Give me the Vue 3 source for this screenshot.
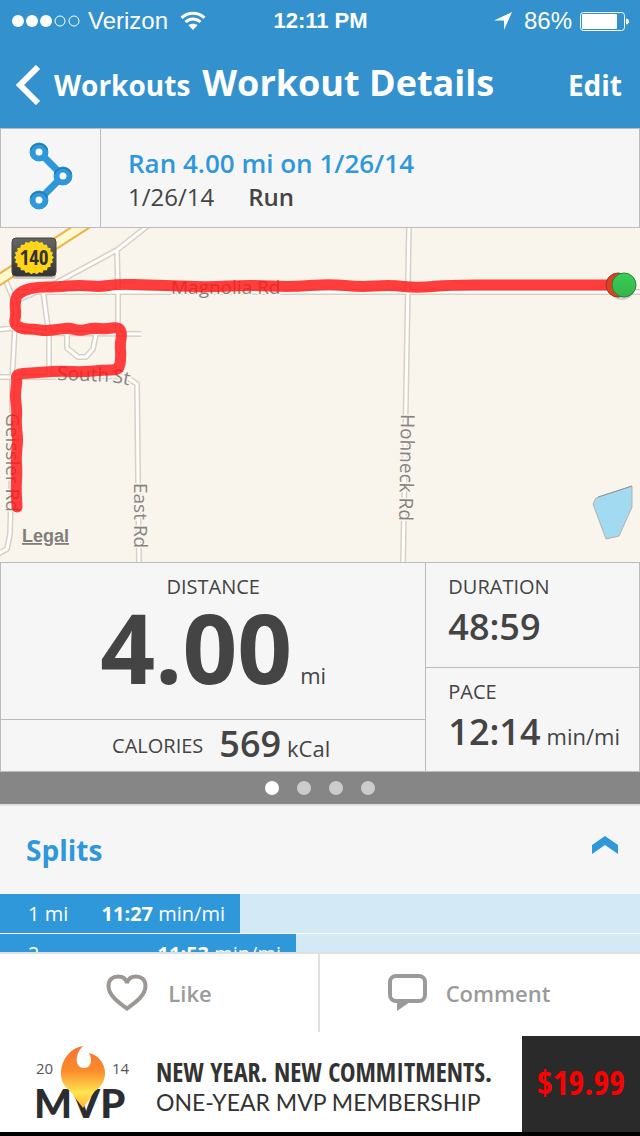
<template>
    <div class="screen">
        <header class="top">
            <div class="status">
                <div class="status__left">
                    <svg class="status__dots" viewBox="0 0 70 14" aria-hidden="true">
                        <circle v-for="n in 3" :key="n" :cx="n * 14 - 8" cy="7" r="6" fill="#fff" />
                        <circle v-for="n in 2" :key="n" :cx="n * 14 + 34" cy="7" r="5" fill="none" stroke="#fff" />
                    </svg>
                    <span>Verizon</span>
                    <svg class="status__wifi" viewBox="0 0 26 20" aria-hidden="true">
                        <g fill="none" stroke="#fff" stroke-width="3">
                            <path d="M1.5 6.8C8 .6 18 .6 24.500 6.800" />
                            <path d="M5.500 11C10 7 16 7 20.500 11" />
                        </g>
                        <path d="M8.500 14.200C11 12.200 15 12.200 17.500 14.200L13 19Z" fill="#fff" />
                    </svg>
                </div>
                <strong class="status__time">12:11 PM</strong>
                <div class="status__right">
                    <svg class="status__arrow" viewBox="0 0 18 18" aria-hidden="true">
                        <path d="M18 0L10 18V8.500H0Z" fill="#fff" />
                    </svg>
                    <span>86%</span>
                    <svg class="status__battery" viewBox="0 0 49 19" aria-hidden="true">
                        <rect x=".5" y=".5" width="44" height="18" rx="3" fill="none" stroke="#fff" />
                        <rect x="2" y="2" width="35" height="15" rx="1" fill="#fff" />
                        <path d="M46 6.500Q49 7 49 9.500T46 12.500Z" fill="#fff" />
                    </svg>
                </div>
            </div>
            <nav class="nav">
                <a class="nav__back" href="#workouts">
                    <svg viewBox="0 0 25 40" aria-hidden="true">
                        <path d="M22 2L4 20L22 38" fill="none" stroke="#fff" stroke-width="6" />
                    </svg>
                    <span>Workouts</span>
                </a>
                <h1 class="nav__title">Workout Details</h1>
                <a class="nav__edit" href="#edit">Edit</a>
            </nav>
        </header>

        <main class="content">
            <section class="summary">
                <div class="summary__icon">
                    <svg viewBox="0 0 46 70" aria-hidden="true">
                        <g fill="none" stroke="#fff" transform="translate(1 2)">
                            <path d="M11 11L35 35L11 59" stroke-width="7" />
                            <circle v-for="p in nodes" :key="p.y" :cx="p.x" :cy="p.y" r="6.500" stroke-width="6" />
                        </g>
                        <path d="M11 11L35 35L11 59" fill="none" stroke="#2f98da" stroke-width="7" />
                        <g v-for="p in nodes" :key="p.y">
                            <circle :cx="p.x" :cy="p.y" r="6.500" fill="#fff" stroke="#2f98da" stroke-width="6" />
                            <path :d="`M${p.x - 8.5} ${p.y - 2}A9 9 0 0 1 ${p.x + 8.5} ${p.y - 2}`" fill="none" stroke="#2379b4" stroke-width="1.500" />
                        </g>
                    </svg>
                </div>
                <div class="summary__text">
                    <h2>Ran 4.00 mi on 1/26/14</h2>
                    <p><span>1/26/14</span><b>Run</b></p>
                </div>
            </section>

            <svg class="map" viewBox="0 0 640 334" role="img" aria-label="Route map">
                <rect width="640" height="334" fill="#f9f4ec" />
                <g fill="none" stroke-linejoin="round">
                    <g v-for="layer in roadLayers" :key="layer.color" :stroke="layer.color" :stroke-width="layer.width">
                        <path v-for="d in roads" :key="d" :d="d" />
                    </g>
                    <path d="M-6 55L92 -8" stroke="#f2b040" stroke-width="12" />
                    <path d="M-6 55L92 -8" stroke="#fff9d0" stroke-width="8" />
                </g>
                <path d="M596 270L632 258V279L619 308L606 311L593 276Z" fill="#a2daf2" stroke="#b5b0aa" />
                <path d="M598 269L632 258" stroke="#8f9799" />
                <g class="map__labels">
                    <text x="171" y="66">Magnolia Rd</text>
                    <text transform="translate(57 152) rotate(2)">South</text>
                    <text transform="translate(112 154) rotate(11)">St</text>
                    <text transform="translate(6 185) rotate(90)">Geissler Rd</text>
                    <text transform="translate(134 255) rotate(90)">East Rd</text>
                    <text transform="translate(401 186) rotate(91)">Hohneck Rd</text>
                </g>
                <path :d="route" fill="none" stroke="#ff1515" stroke-opacity=".82" stroke-width="11" stroke-linecap="round" stroke-linejoin="round" />
                <defs>
                    <linearGradient id="pin" x2="0" y2="1">
                        <stop offset="0" stop-color="#35d055" />
                        <stop offset="1" stop-color="#38b24a" />
                    </linearGradient>
                    <linearGradient id="shield" x2="0" y2="1">
                        <stop offset="0" stop-color="#666" />
                        <stop offset="1" stop-color="#333" />
                    </linearGradient>
                </defs>
                <circle cx="622" cy="59" r="13" fill="#777" opacity=".3" />
                <circle cx="618" cy="57" r="12" fill="#d94321" stroke="#8c3c22" />
                <circle cx="624" cy="57" r="12" fill="url(#pin)" stroke="#24833a" />
                <rect x="12" y="12" width="44" height="39" rx="4" fill="#777" opacity=".35" />
                <rect x="12" y="10" width="44" height="38" rx="4" fill="url(#shield)" stroke="#444" />
                <polygon :points="badge" fill="#ffd51b" />
                <text class="map__shield" x="34" y="37" text-anchor="middle">140</text>
                <a href="#legal"><text class="map__legal" x="22" y="314">Legal</text></a>
            </svg>

            <section class="stats">
                <div class="stats__main">
                    <div class="stats__distance">
                        <h3>DISTANCE</h3>
                        <p><strong>4.00</strong><span>mi</span></p>
                    </div>
                    <div class="stats__calories">
                        <h3>CALORIES</h3>
                        <p><strong>569</strong><span>kCal</span></p>
                    </div>
                </div>
                <div class="stats__side">
                    <div>
                        <h3>DURATION</h3>
                        <p><strong>48:59</strong></p>
                    </div>
                    <div>
                        <h3>PACE</h3>
                        <p><strong>12:14</strong><span>min/mi</span></p>
                    </div>
                </div>
            </section>

            <div class="pager">
                <button
                    v-for="n in 4"
                    :key="n"
                    type="button"
                    :class="{ active: page === n }"
                    :aria-label="`Page ${n}`"
                    @click="page = n"
                ></button>
            </div>

            <section class="splits">
                <button class="splits__head" type="button" :aria-expanded="open" @click="open = !open">
                    <span>Splits</span>
                    <svg viewBox="0 0 26 18" aria-hidden="true">
                        <path d="M0 9L13 0L26 9V18L13 9L0 18Z" fill="#2f98da" />
                    </svg>
                </button>
                <ul v-if="open">
                    <li v-for="split in splits" :key="split.label">
                        <div class="splits__bar" :style="{ width: split.width + '%' }">
                            <span>{{ split.label }}</span>
                            <span><b>{{ split.pace }}</b> min/mi</span>
                        </div>
                    </li>
                </ul>
            </section>
        </main>

        <footer>
            <div class="actions">
                <button class="actions__like" type="button">
                    <svg viewBox="0 0 42 38" aria-hidden="true">
                        <path d="M21 34.500C14 29.500 2.500 22 2.500 12C2.500 5.500 7 2.500 12 2.500C16.500 2.500 20 5 21 9C22 5 25.500 2.500 30 2.500C35 2.500 39.500 5.500 39.500 12C39.500 22 28 29.500 21 34.500Z" fill="none" stroke="#9c9694" stroke-width="4" />
                    </svg>
                    <span>Like</span>
                </button>
                <button class="actions__comment" type="button">
                    <svg viewBox="0 0 40 38" aria-hidden="true">
                        <rect x="2" y="2" width="35" height="25" rx="6" fill="none" stroke="#9a9a9a" stroke-width="4" />
                        <path d="M9 28H22L9 37Z" fill="#9a9a9a" />
                    </svg>
                    <span>Comment</span>
                </button>
            </div>
            <a class="ad" href="#mvp">
                <svg class="ad__logo" viewBox="0 0 96 84" aria-hidden="true">
                    <defs>
                        <linearGradient id="flame" x2="0" y2="1">
                            <stop offset="0" stop-color="#f47330" />
                            <stop offset=".4" stop-color="#fb8c2c" />
                            <stop offset=".75" stop-color="#ffe450" />
                            <stop offset="1" stop-color="#ffb52c" />
                        </linearGradient>
                    </defs>
                    <text x="0" y="34" class="ad__year">20</text>
                    <text x="76" y="34" class="ad__year">14</text>
                    <text x="-2" y="78" class="ad__mvp">MVP</text>
                    <path d="M47 6C35 8 25 19 25 34C25 42 29 47 34 51L47 68L59 51C65 47 69 41 69 33C69 23 62 15 53 13C57 20 55 28 48 28C39 28 38 15 47 6Z" fill="url(#flame)" />
                </svg>
                <span class="ad__copy">
                    <strong>NEW YEAR. NEW COMMITMENTS.</strong>
                    <span>ONE-YEAR MVP MEMBERSHIP</span>
                </span>
                <span class="ad__price">$19.99</span>
            </a>
        </footer>
    </div>
</template>

<script setup>
import { ref } from 'vue';

const page = ref(1);
const open = ref(true);

const splits = [
    { label: '1 mi', pace: '11:27', width: 37.5 },
    { label: '2', pace: '11:53', width: 46.25 },
];

const nodes = [
    { x: 11, y: 11 },
    { x: 35, y: 35 },
    { x: 11, y: 59 },
];

const roadLayers = [
    { color: '#d9d0c4', width: 6 },
    { color: '#ffffff', width: 3 },
];

const roads = [
    'M150 -4L117 22L54 56L16 73',
    'M6 53L16 78L12 154V230L10 306L7 321L-4 327',
    'M117 22L118 62V104',
    'M43 62L49 108V150',
    'M-4 102L15 100L50 105L141 106',
    'M-4 149H50L125 148L137 156L139 338',
    'M67 106V120L78 129H86L93 121L96 106',
    'M16 64H640',
    'M409 -4L403 338',
];

const track = [
    [618, 57], [560, 57], [500, 57], [450, 57], [416, 60], [391, 57], [360, 59], [330, 56],
    [290, 59], [250, 57], [210, 59], [180, 58], [150, 57], [117, 56], [100, 59], [80, 57],
    [55, 59], [38, 59], [24, 62], [16, 68], [15, 78], [16, 87], [14, 96], [22, 101],
    [34, 101], [45, 103], [60, 101], [70, 100], [80, 103], [92, 100], [106, 101], [119, 99],
    [122, 106], [120, 116], [121, 130], [119, 142], [105, 142], [82, 144], [60, 143], [46, 144],
    [30, 145], [16, 146], [17, 154], [15, 168], [17, 182], [16, 196], [18, 212], [16, 228],
    [17, 244], [16, 260], [17, 279],
];

// rounds the track off by curving through the midpoint of each pair
const route = track.reduce((d, [x, y], i) => {
    if (i === 0) return `M${x} ${y}`;
    const next = track[i + 1];
    return next ? `${d}Q${x} ${y} ${(x + next[0]) / 2} ${(y + next[1]) / 2}` : `${d}L${x} ${y}`;
}, '');

// toothed edge of the route number sign
const badge = Array.from({ length: 44 }, (_, i) => {
    const angle = (i / 44) * Math.PI * 2;
    const k = i % 2 ? 0.9 : 1;
    return `${34 + Math.cos(angle) * 20 * k},${29.5 + Math.sin(angle) * 17 * k}`;
}).join(' ');
</script>

<style>
body {
    margin: 0;
    background: #000;
}
</style>

<style scoped>
* {
    box-sizing: border-box;
}

.screen {
    display: flex;
    flex-direction: column;
    height: 100vh;
    font-family: 'Open Sans', 'Noto Sans', sans-serif;
    color: #444;
    background: #f6f6f6;
}

h1,
h2,
h3,
p,
ul {
    margin: 0;
    padding: 0;
}

a {
    color: inherit;
    text-decoration: none;
}

button {
    margin: 0;
    padding: 0;
    border: 0;
    font: inherit;
    color: inherit;
    background: none;
}

svg {
    display: block;
    flex: none;
}

.top {
    flex: none;
    color: #fff;
    background: #3392ce;
}

.status {
    display: grid;
    grid-template-columns: 1fr auto 1fr;
    align-items: center;
    height: 42px;
    padding: 0 11px 0 12px;
    font-family: 'Liberation Sans', Arial, sans-serif;
    font-size: 24px;
}

.status__left,
.status__right {
    display: flex;
    align-items: center;
    gap: 8px;
}

.status__left {
    gap: 6px;
}

.status__right {
    justify-content: flex-end;
}

.status__dots {
    width: 70px;
}

.status__wifi {
    width: 26px;
    margin-left: 6px;
}

.status__time {
    font-size: 22px;
}

.status__arrow {
    width: 18px;
    margin-right: 4px;
}

.status__battery {
    width: 49px;
}

.nav {
    display: flex;
    align-items: center;
    height: 86px;
    padding: 0 18px 0 16px;
    font-size: 28px;
    font-weight: 700;
}

.nav__back {
    display: flex;
    align-items: center;
    gap: 13px;
}

.nav__back svg {
    width: 25px;
}

.nav__title {
    margin-left: 12px;
    padding-bottom: 4px;
    font-size: 36px;
    line-height: 40px;
    white-space: nowrap;
}

.nav__edit {
    margin-left: auto;
}

.content {
    flex: 1;
    min-height: 0;
    overflow: hidden;
}

.summary {
    display: flex;
    height: 100px;
    border: 1px solid #bbb;
}

.summary__icon {
    display: grid;
    place-items: center;
    width: 100px;
    padding-bottom: 4px;
    border-right: 1px solid #bbb;
}

.summary__icon svg {
    width: 46px;
}

.summary__text {
    padding: 16px 27px;
}

.summary__text h2 {
    font-size: 26px;
    font-weight: 600;
    line-height: 36px;
    color: #2f98da;
}

.summary__text p {
    display: flex;
    gap: 34px;
    font-size: 24px;
    line-height: 32px;
}

.summary__text b {
    font-weight: 600;
}

.map {
    width: 100%;
    height: auto;
}

.map__labels {
    font-size: 19px;
    fill: #868482;
    stroke: #f9f4ec;
    stroke-width: 3px;
    paint-order: stroke;
}

.map__shield {
    font: 700 21px 'Open Sans Condensed', 'Open Sans', sans-serif;
    font-stretch: condensed;
    fill: #333;
}

.map__legal {
    font: 700 18px 'Liberation Sans', Arial, sans-serif;
    fill: #807e7b;
    text-decoration: underline;
}

.stats {
    display: grid;
    grid-template-rows: minmax(0, 1fr);
    grid-template-columns: 2fr 1fr;
    height: 210px;
    border: 1px solid #bbb;
}

.stats h3 {
    font-size: 20px;
    font-weight: 400;
    line-height: 28px;
}

.stats p {
    display: flex;
    align-items: baseline;
    gap: 6px;
    font-size: 22px;
    line-height: 52px;
}

.stats strong {
    font-size: 36px;
    font-weight: 600;
}

.stats__main {
    display: grid;
    grid-template-rows: minmax(0, 3fr) minmax(0, 1fr);
    border-right: 1px solid #bbb;
}

.stats__distance {
    display: flex;
    flex-direction: column;
    align-items: center;
    padding-top: 10px;
}

.stats__distance p {
    gap: 8px;
    line-height: 92px;
}

.stats__distance strong {
    font-size: 96px;
    font-weight: 700;
}

.stats__calories {
    display: flex;
    align-items: center;
    justify-content: center;
    gap: 16px;
    padding-left: 16px;
    border-top: 1px solid #bbb;
}

.stats__calories p {
    line-height: 48px;
}

.stats__side {
    display: grid;
    grid-template-rows: minmax(0, 1fr) minmax(0, 1fr);
}

.stats__side div {
    padding: 10px 0 0 22px;
}

.stats__side div + div {
    border-top: 1px solid #bbb;
}

.pager {
    display: flex;
    align-items: center;
    justify-content: center;
    gap: 18px;
    height: 32px;
    background: #868686;
}

.pager button {
    width: 14px;
    height: 14px;
    border-radius: 50%;
    background: #ccc;
}

.pager .active {
    background: #fff;
}

.splits {
    border-top: 2px solid #e0e0e0;
}

.splits__head {
    display: flex;
    align-items: center;
    justify-content: space-between;
    width: 100%;
    height: 88px;
    padding: 0 22px 0 26px;
    font-size: 28px;
    font-weight: 700;
    color: #2f98da;
}

.splits__head svg {
    width: 26px;
    margin-bottom: 10px;
}

.splits ul {
    list-style: none;
}

.splits li {
    height: 40px;
    border-bottom: 1px solid #fff;
    background: #d4e9f6;
}

.splits__bar {
    display: flex;
    align-items: center;
    justify-content: space-between;
    height: 39px;
    padding: 0 15px 0 28px;
    font-size: 20px;
    color: #fff;
    background: #2f98da;
}

footer {
    flex: none;
    background: #fff;
}

.actions {
    display: grid;
    grid-template-columns: 1fr 1fr;
    height: 84px;
    padding-bottom: 4px;
    border-top: 2px solid #e0e0e0;
}

.actions button {
    display: flex;
    align-items: center;
    justify-content: center;
    gap: 20px;
    font-size: 22px;
    font-weight: 600;
    color: #9a9a9a;
}

.actions svg {
    height: 38px;
}

.actions__like {
    border-right: 2px solid #e0e0e0;
}

.actions .actions__comment {
    gap: 18px;
    padding-right: 22px;
}

.ad {
    display: flex;
    height: 100px;
    border-bottom: 4px solid #000;
    color: #333;
}

.ad__logo {
    align-self: flex-start;
    width: 96px;
    margin: 4px 24px 0 36px;
}

.ad__year {
    font-size: 15px;
    fill: #555;
}

.ad__mvp {
    font: 900 40px Lato, sans-serif;
    fill: #2b2d31;
}

.ad__copy {
    display: flex;
    flex: 1;
    flex-direction: column;
    justify-content: center;
    padding-top: 6px;
    font-family: Lato, sans-serif;
    font-size: 23px;
    line-height: 30px;
    white-space: nowrap;
}

.ad__copy strong {
    font: 700 26px/30px 'Liberation Sans Narrow', 'Open Sans Condensed', sans-serif;
}

.ad__price {
    display: grid;
    place-items: center;
    width: 118px;
    padding-bottom: 4px;
    font: 700 34px 'Liberation Sans Narrow', 'Open Sans Condensed', sans-serif;
    color: #f00;
    background: #2a2a2a;
}
</style>
